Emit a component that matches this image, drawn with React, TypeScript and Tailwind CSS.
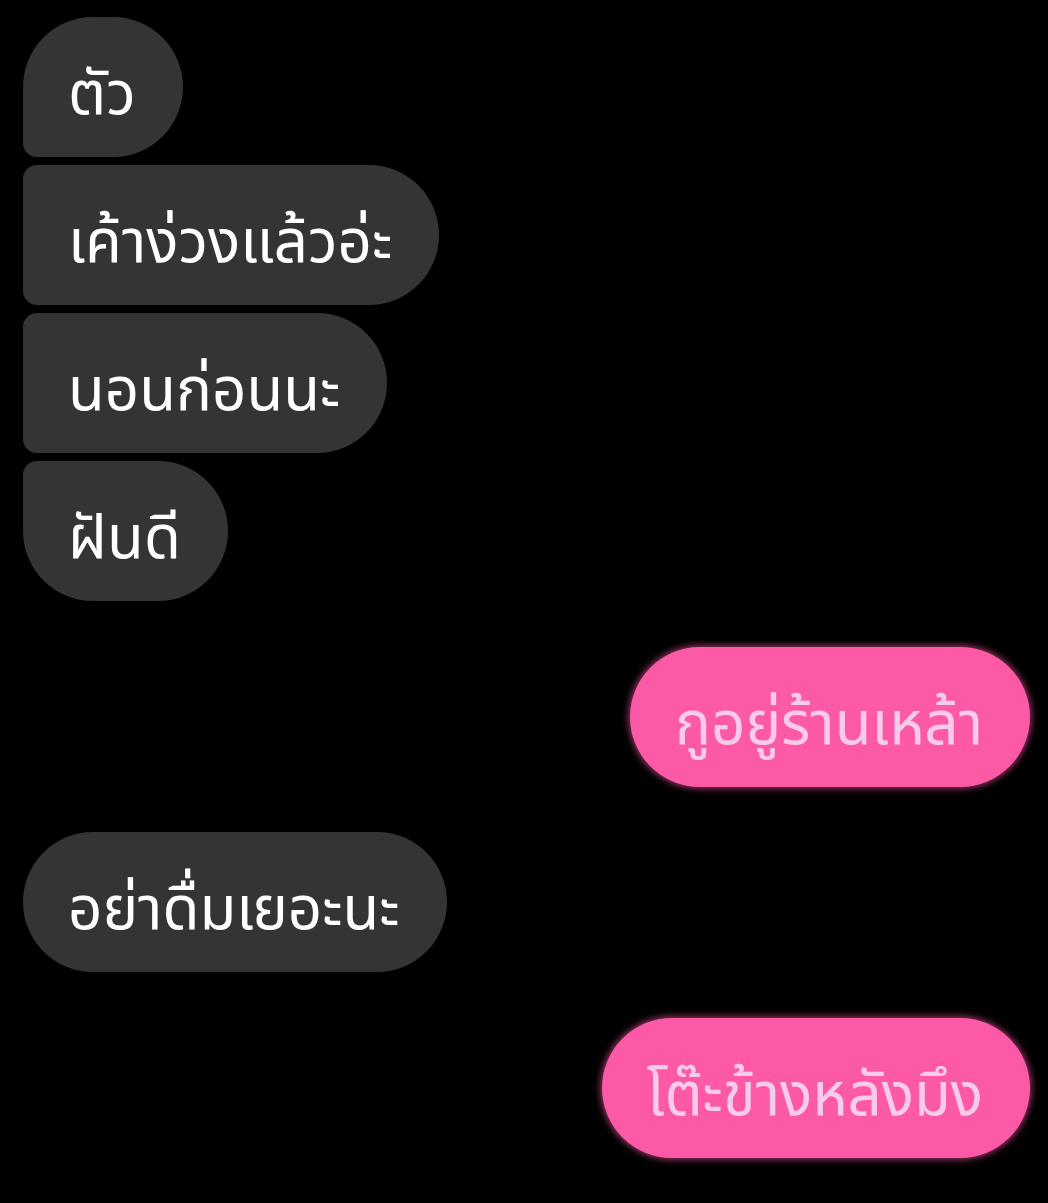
const messages: { text: string; side: "in" | "out"; shape: string; mt: string }[] = [
  { text: "ตัว", side: "in", shape: "rounded-[70px] rounded-bl-[14px]", mt: "mt-0" },
  { text: "เค้าง่วงแล้วอ่ะ", side: "in", shape: "rounded-r-[70px] rounded-l-[14px]", mt: "mt-[8px]" },
  { text: "นอนก่อนนะ", side: "in", shape: "rounded-r-[70px] rounded-l-[14px]", mt: "mt-[8px]" },
  { text: "ฝันดี", side: "in", shape: "rounded-[70px] rounded-tl-[14px]", mt: "mt-[8px]" },
  { text: "กูอยู่ร้านเหล้า", side: "out", shape: "rounded-[70px]", mt: "mt-[46px]" },
  { text: "อย่าดื่มเยอะนะ", side: "in", shape: "rounded-[70px]", mt: "mt-[45px]" },
  { text: "โต๊ะข้างหลังมึง", side: "out", shape: "rounded-[70px]", mt: "mt-[46px]" },
];

const Bubble = ({ text, side, shape, mt }: (typeof messages)[number]) => {
  const isOut = side === "out";
  return (
    <div className={`flex ${isOut ? "justify-end" : "justify-start"} ${mt}`}>
      <div
        className={`flex h-[140px] items-center pl-[45px] pr-[47px] pt-[18px] text-[60px] leading-none ${shape} ${
          isOut
            ? "bg-[#fc5aa7] text-[#f9cbea] shadow-[0_0_6px_2px_rgba(255,90,170,0.55)]"
            : "bg-[#343434] text-white"
        }`}
      >
        {text}
      </div>
    </div>
  );
};

export default function App() {
  return (
    <div
      className="min-h-[1203px] w-[1048px] bg-black pl-[23px] pr-[18px] pt-[17px]"
      style={{ fontFamily: '"Noto Sans Thai", "Noto Sans", "DejaVu Sans", sans-serif' }}
    >
      {messages.map((m, i) => (
        <Bubble key={i} {...m} />
      ))}
    </div>
  );
}
